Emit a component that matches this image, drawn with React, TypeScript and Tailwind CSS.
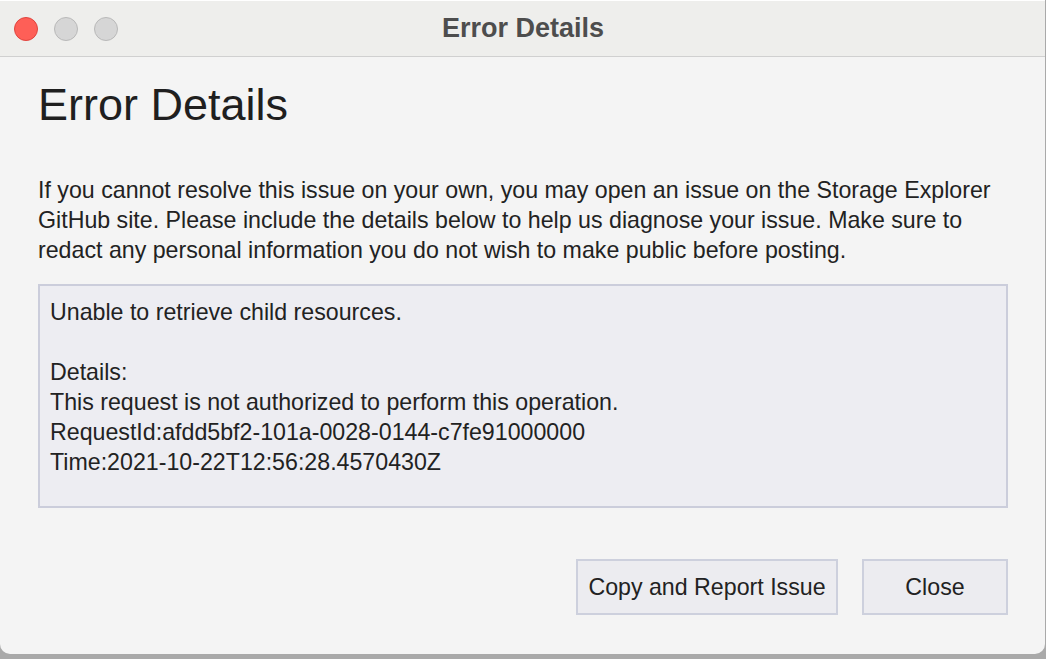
import React from "react";

export default function App() {
  return (
    <div className="w-[1046px] h-[659px] bg-[#a9a9a9] font-['Liberation_Sans',Arial,sans-serif] overflow-hidden">
      <div className="w-[1045px] h-[654px] bg-[#f4f4f4] rounded-b-[10px] flex flex-col overflow-hidden">
        {/* title bar */}
        <div className="relative h-[57px] shrink-0 bg-[#eeeeec] border-b border-[#d0d0d0] border-t border-t-white flex items-center">
          <div className="flex items-center gap-[16px] pl-[14px]">
            <span className="w-[24px] h-[24px] rounded-full bg-[#fe5f57] border border-[#e0443e]" />
            <span className="w-[24px] h-[24px] rounded-full bg-[#d6d6d6] border border-[#b9b9b9]" />
            <span className="w-[24px] h-[24px] rounded-full bg-[#d6d6d6] border border-[#b9b9b9]" />
          </div>
          <div className="absolute inset-0 flex items-center justify-center pl-[1px] text-[27px] font-bold text-[#4d4d4d]">
            Error Details
          </div>
        </div>

        <div className="px-[38px] text-[#222222]">
          <h1 className="mt-[22px] text-[45px] leading-[52px] font-normal text-[#1f1f1f]">Error Details</h1>

          <p className="mt-[44px] text-[23.2px] leading-[30px] whitespace-nowrap">
            If you cannot resolve this issue on your own, you may open an issue on the Storage Explorer
            <br />
            GitHub site. Please include the details below to help us diagnose your issue. Make sure to
            <br />
            redact any personal information you do not wish to make public before posting.
          </p>

          <div className="mt-[19px] w-[970px] h-[224px] border-2 border-[#cbcddb] bg-[#ededf2] pl-[10px] pt-[11px] text-[23.2px] leading-[30px] text-[#222222]">
            <div>Unable to retrieve child resources.</div>
            <div className="h-[30px]" />
            <div>Details:</div>
            <div>This request is not authorized to perform this operation.</div>
            <div>RequestId:afdd5bf2-101a-0028-0144-c7fe91000000</div>
            <div>Time:2021-10-22T12:56:28.4570430Z</div>
          </div>

          <div className="mt-[51px] flex justify-end gap-[24px] w-[970px]">
            <button className="w-[262px] h-[56px] border-2 border-[#cdd0dd] bg-[#ececf0] text-[23.2px] text-[#222222]">
              Copy and Report Issue
            </button>
            <button className="w-[146px] h-[56px] border-2 border-[#cdd0dd] bg-[#ececf0] text-[23.2px] text-[#222222]">
              Close
            </button>
          </div>
        </div>
      </div>
    </div>
  );
}
